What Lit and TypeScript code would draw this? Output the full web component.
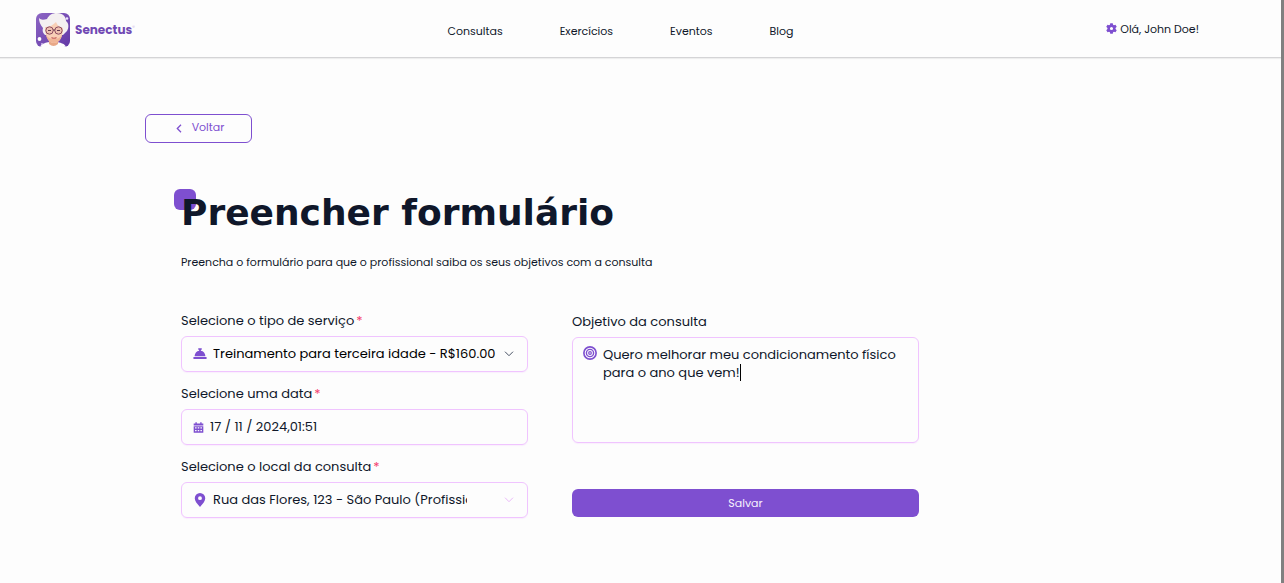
import { LitElement, html, css, svg } from "lit";
import { customElement, state } from "lit/decorators.js";

const icons = {
  gear: svg`<path fill-rule="evenodd" d="M6.200.3h3.600l.5 2.200 1.300.8 2.200-.8 1.800 3.100-1.700 1.500v1.800l1.700 1.500-1.800 3.100-2.200-.8-1.300.8-.5 2.200H6.200l-.5-2.200-1.300-.8-2.200.8-1.800-3.100 1.700-1.500V7.100L.4 5.600l1.800-3.100 2.200.8 1.300-.8zM8 5.700a2.300 2.300 0 1 0 0 4.600 2.300 2.300 0 0 0 0-4.600z"/>`,
  bell: svg`<path d="M6 1.500h4v1.600H9v1.200c3 .5 5 2.800 5.200 6.200H1.800C2 7.100 4 4.800 7 4.300V3.100H6zM.5 11.500h15v2.300H.5z"/>`,
  calendar: svg`<path fill-rule="evenodd" d="M3.500.5h2V2h5V.5h2V2H15v3H1V2h2.500zM1 6h14v9.500H1zM3 7.500v1.800h2.200V7.500zm3.900 0v1.800h2.200V7.500zm3.900 0v1.800H13V7.500zM3 11.500v1.800h2.200v-1.800zm3.900 0v1.800h2.200v-1.800zm3.900 0v1.800H13v-1.800z"/>`,
  pin: svg`<path fill-rule="evenodd" d="M8 0a6 6 0 0 0-6 6c0 3.200 2.600 6.200 6 10 3.400-3.800 6-6.800 6-10a6 6 0 0 0-6-6zm0 3.700a2.200 2.200 0 1 1 0 4.400 2.200 2.200 0 0 1 0-4.400z"/>`,
  target: svg`<g fill="none" stroke="currentColor"><circle cx="8" cy="8" r="7" stroke-width="1.900"/><circle cx="8" cy="8" r="4.100" stroke-width="1.600"/><circle cx="8" cy="8" r="1.500" stroke-width="1.400"/></g>`,
};

@customElement("app-root")
export class AppRoot extends LitElement {
  static styles = css`
    :host {
      --accent: #7e4fd0;
      --ink: #0f172a;
      --line: #f0c4ff;
      display: block;
      box-sizing: border-box;
      min-height: 100vh;
      background: #fdfdfd;
      border-right: 3px solid #808080;
      color: var(--ink);
      font-family: Poppins, Inter, sans-serif;
      font-size: 13px;
      line-height: 18px;
    }
    * {
      box-sizing: border-box;
    }
    a {
      color: inherit;
      text-decoration: none;
    }
    .header {
      display: flex;
      align-items: center;
      justify-content: space-between;
      height: 58px;
      padding: 2px 82px 0 36px;
      border-bottom: 1px solid #d4d4d6;
      box-shadow: 0 1px 1px #0000000f;
      font-size: 11px;
    }
    .brand {
      display: flex;
      align-items: center;
      gap: 5px;
      color: #7149b4;
      font-weight: 700;
      font-size: 12px;
    }
    .brand svg {
      width: 34px;
      height: 34px;
    }
    .brand sup {
      font-size: 5px;
      line-height: 5px;
      font-weight: 400;
      color: #b79be0;
    }
    .nav {
      display: flex;
      gap: 57px;
      padding-top: 2px;
    }
    .user {
      display: flex;
      align-items: center;
      gap: 3px;
      padding-bottom: 2px;
    }
    .icon {
      display: block;
      width: 14px;
      height: 14px;
      fill: currentColor;
      color: var(--accent);
    }
    .small {
      width: 11px;
      height: 11px;
    }
    .main {
      max-width: 991px;
      margin: 0 auto;
      padding: 56px 0;
    }
    .back {
      display: flex;
      align-items: center;
      justify-content: center;
      gap: 10px;
      width: 107px;
      height: 29px;
      padding: 0 0 3px 3px;
      border: 1px solid var(--accent);
      border-radius: 6px;
      background: none;
      color: var(--accent);
      font: inherit;
      font-size: 11px;
    }
    .back svg {
      width: 6px;
      height: 9px;
      margin-top: 3px;
    }
    .content {
      padding: 46px 36px 0;
    }
    .title {
      position: relative;
      isolation: isolate;
      margin: 0;
      font: 700 36px/48px "DejaVu Sans", sans-serif;
    }
    .title::before {
      content: "";
      position: absolute;
      z-index: -1;
      left: -7px;
      top: 0;
      width: 22px;
      height: 21px;
      border-radius: 6px;
      background: var(--accent);
    }
    .lead {
      margin: 16px 0 41px;
      font-size: 11px;
    }
    .form {
      display: grid;
      grid-template-columns: repeat(2, minmax(0, 1fr));
      gap: 44px;
      max-width: 738px;
    }
    .column {
      display: flex;
      flex-direction: column;
      justify-content: space-between;
      gap: 13px;
    }
    .column.end {
      padding: 1px 0;
    }
    .field {
      display: flex;
      flex-direction: column;
      gap: 6px;
    }
    .star {
      margin-left: 2px;
      color: #f43f6e;
    }
    .box {
      position: relative;
      display: flex;
      align-items: center;
      height: 36px;
      border: 1px solid var(--line);
      border-radius: 6px;
      box-shadow: 0 1px 1px #f0c4ff40;
    }
    .box > .icon {
      position: absolute;
      left: 11px;
    }
    .box > .chevron {
      position: absolute;
      right: 13px;
      width: 10px;
      height: 6px;
      color: #475063;
      pointer-events: none;
    }
    .box > .chevron.faint {
      color: #e9b8f8;
    }
    .control {
      appearance: none;
      width: 100%;
      height: 100%;
      margin: 0;
      padding: 0 60px 0 31px;
      border: 0;
      border-radius: 6px;
      outline: 0;
      background: none;
      color: inherit;
      font: inherit;
    }
    .control.dark {
      padding-right: 28px;
      color: #000;
    }
    .control.date {
      padding-left: 28px;
    }
    .box.area {
      height: 106px;
      align-items: flex-start;
    }
    .box.area > .icon {
      top: 8px;
      left: 10px;
    }
    textarea.control {
      padding: 8px 12px 8px 30px;
      resize: none;
    }
    .caret {
      position: absolute;
      top: 26px;
      left: 167px;
      width: 1px;
      height: 17px;
      background: #000;
    }
    .save {
      height: 28px;
      padding-bottom: 2px;
      border: 0;
      border-radius: 6px;
      background: var(--accent);
      color: #f6f1fd;
      font: inherit;
      font-size: 11px;
    }
  `;

  @state() private goal = "Quero melhorar meu condicionamento físico para o ano que vem!";

  private icon(name: keyof typeof icons, cls = "") {
    return html`<svg class="icon ${cls}" viewBox="0 0 16 16" aria-hidden="true">${icons[name]}</svg>`;
  }

  private chevron(cls = "") {
    return html`<svg class="chevron ${cls}" viewBox="0 0 10 6" aria-hidden="true">
      <path d="M1 .7l4 4 4-4" fill="none" stroke="currentColor" />
    </svg>`;
  }

  private label(id: string, text: string, required = true) {
    return html`<label for=${id}>${text}${required ? html`<span class="star">*</span>` : ""}</label>`;
  }

  private logo() {
    return html`<svg viewBox="0 0 34 34" aria-hidden="true">
      <defs>
        <linearGradient id="bg" x1="0" y1="0" x2="1" y2="1">
          <stop offset="0" stop-color="#8d66c4" />
          <stop offset="1" stop-color="#6238a6" />
        </linearGradient>
        <clipPath id="clip"><rect width="34" height="34" rx="6" /></clipPath>
      </defs>
      <g clip-path="url(#clip)">
        <rect width="34" height="34" fill="url(#bg)" />
        <path d="M4 34c1-3 5-5 13-5s12 2 13 5z" fill="#fdfdfd" />
        <path d="M13 25h9v6q-4.500 4-9 0z" fill="#e8a888" />
        <path d="M7 15C4 12 3 8 3 5c2 2 4 2 8 1 2-4 5-6 10-6 6 0 9 4 9 8 3 2 3 7 1 10l-4 4H9c-2-2-3-4-2-7z" fill="#f4f0f1" />
        <path d="M9 14c5 0 8-2 11-5 1 3 3 5 7 6 0 8-3 15-9 15S9 22 9 14z" fill="#f8cfb6" />
        <path d="M10 22c1 5 4 8 8 8s7-3 8-8c-2 3-5 4-8 4s-6-1-8-4z" fill="#f0b597" />
        <g fill="#eebfae" stroke="#8b4b60" stroke-width="1">
          <circle cx="13.500" cy="17.500" r="3.700" />
          <circle cx="22.500" cy="17.500" r="3.700" />
        </g>
        <path d="M17 17h2M12 17.500h3M21 17.500h3" stroke="#633b4f" stroke-width="1" />
        <path d="M15.500 24.500q2.500 1.500 5 0" fill="none" stroke="#c6605c" stroke-width="1.200" />
        <circle cx="3.500" cy="26" r="1.900" fill="#fff" />
        <circle cx="31" cy="5.500" r="1.300" fill="#eee4ff" />
        <circle cx="6" cy="31" r=".9" fill="#d9c8f4" />
      </g>
    </svg>`;
  }

  render() {
    return html`
      <header class="header">
        <a class="brand" href="#">${this.logo()}<span>Senectus<sup>®</sup></span></a>
        <nav class="nav">
          ${["Consultas", "Exercícios", "Eventos", "Blog"].map((item) => html`<a href="#">${item}</a>`)}
        </nav>
        <a class="user" href="#">${this.icon("gear", "small")}<span>Olá, John Doe!</span></a>
      </header>
      <main class="main">
        <button class="back" type="button">
          <svg viewBox="0 0 6 9" aria-hidden="true">
            <path d="M5 .8L1.300 4.500 5 8.200" fill="none" stroke="currentColor" stroke-width="1.300" />
          </svg>
          Voltar
        </button>
        <section class="content">
          <h1 class="title">Preencher formulário</h1>
          <p class="lead">Preencha o formulário para que o profissional saiba os seus objetivos com a consulta</p>
          <form class="form">
            <div class="column">
              <div class="field">
                ${this.label("service", "Selecione o tipo de serviço")}
                <div class="box">
                  ${this.icon("bell")}
                  <select class="control dark" id="service">
                    <option>Treinamento para terceira idade - R$160.00</option>
                  </select>
                  ${this.chevron()}
                </div>
              </div>
              <div class="field">
                ${this.label("date", "Selecione uma data")}
                <div class="box">
                  ${this.icon("calendar", "small")}
                  <input class="control date" id="date" type="text" value="17 / 11 / 2024,01:51" />
                </div>
              </div>
              <div class="field">
                ${this.label("place", "Selecione o local da consulta")}
                <div class="box">
                  ${this.icon("pin")}
                  <select class="control" id="place">
                    <option>Rua das Flores, 123 - São Paulo (Profissional)</option>
                  </select>
                  ${this.chevron("faint")}
                </div>
              </div>
            </div>
            <div class="column end">
              <div class="field">
                ${this.label("goal", "Objetivo da consulta", false)}
                <div class="box area">
                  ${this.icon("target")}
                  <textarea
                    class="control"
                    id="goal"
                    .value=${this.goal}
                    @input=${(e: Event) => (this.goal = (e.target as HTMLTextAreaElement).value)}
                  ></textarea>
                  <span class="caret"></span>
                </div>
              </div>
              <button class="save" type="button">Salvar</button>
            </div>
          </form>
        </section>
      </main>
    `;
  }
}
